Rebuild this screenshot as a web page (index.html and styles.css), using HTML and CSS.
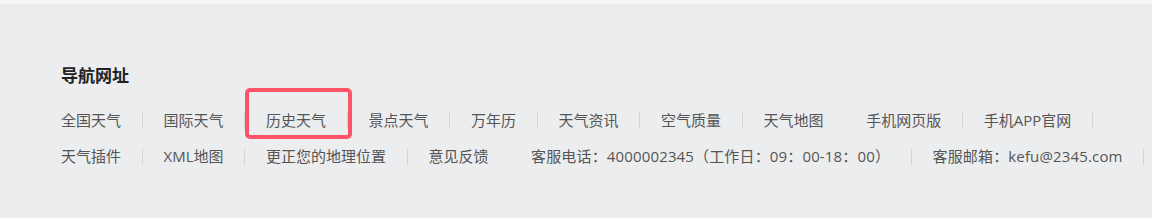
FILE: index.html
```html
<!DOCTYPE html>
<html lang="zh-CN">

<head>
    <meta charset="UTF-8">
    <title>导航网址</title>
    <link rel="stylesheet" href="styles.css">
</head>

<body>
    <div class="top-strip"></div>
    <div class="footer-nav">
        <h3 class="nav-title">导航网址</h3>
        <ul class="nav-row">
            <li>全国天气</li>
            <li>国际天气</li>
            <li class="marked">历史天气<span class="mark-box"></span></li>
            <li>景点天气</li>
            <li>万年历</li>
            <li>天气资讯</li>
            <li>空气质量</li>
            <li class="no-sep">天气地图</li>
            <li>手机网页版</li>
            <li>手机APP官网</li>
        </ul>
        <ul class="nav-row">
            <li>天气插件</li>
            <li>XML地图</li>
            <li>更正您的地理位置</li>
            <li class="no-sep">意见反馈</li>
            <li class="contact">客服电话：4000002345（工作日：09：00-18：00）</li>
            <li class="contact">客服邮箱：kefu@2345.com</li>
        </ul>
    </div>
</body>

</html>
```

FILE: styles.css
```css
body {
    margin: 0;
    padding: 0;
    background-color: #ecedef;
    font-family: "Open Sans", "Noto Sans CJK SC", sans-serif;
    overflow: hidden;
}

.top-strip {
    height: 4px;
    background-color: #f5f6f8;
}

.footer-nav {
    padding: 60px 0 0 61px;
}

.nav-title {
    margin: 0 0 24px;
    font-size: 17px;
    line-height: 24px;
    font-weight: bold;
    color: #222;
}

.nav-row {
    display: flex;
    list-style: none;
    margin: 0 0 19px;
    padding: 0;
    white-space: nowrap;
}

.nav-row li {
    position: relative;
    padding: 0 20.75px;
    font-size: 15px;
    line-height: 17px;
    color: #555;
    border-right: 1px solid #d6d7d9;
}

.nav-row li:first-child {
    padding-left: 0;
}

.nav-row li.no-sep {
    border-right-color: transparent;
}

/* contact text is a touch wider in the original font */
.nav-row li.contact {
    letter-spacing: 0.15px;
}

.mark-box {
    position: absolute;
    left: 0;
    top: -24px;
    width: 107px;
    height: 51px;
    box-sizing: border-box;
    border: 4px solid #ff5468;
    border-radius: 5px;
}
```
